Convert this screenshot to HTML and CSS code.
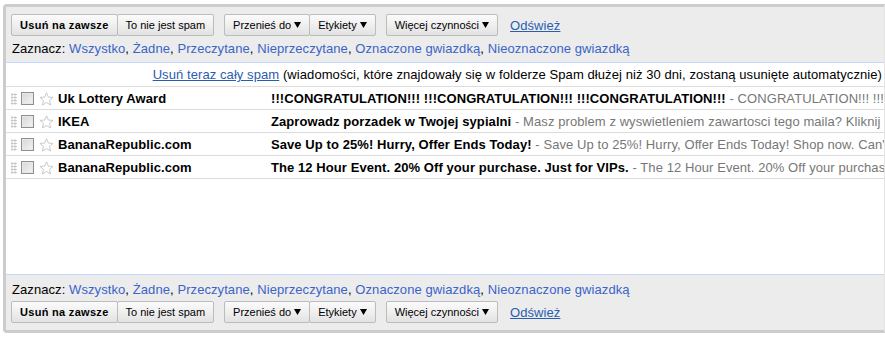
FILE: index.html
```
<!DOCTYPE html>
<html lang="pl">
<head>
<meta charset="utf-8">
<title>Spam</title>
<link rel="stylesheet" href="styles.css">
</head>
<body>
<div class="frame">
  <div class="toolbar toolbar-top">
    <div class="buttons">
      <div class="group">
        <button class="btn btn-bold">Usuń na zawsze</button><button class="btn">To nie jest spam</button>
      </div>
      <div class="group">
        <button class="btn">Przenieś do <svg class="arrow" width="7" height="6" viewBox="0 0 7 6"><path d="M0 0H7L3.5 6Z"/></svg></button><button class="btn">Etykiety <svg class="arrow" width="7" height="6" viewBox="0 0 7 6"><path d="M0 0H7L3.5 6Z"/></svg></button>
      </div>
      <div class="group">
        <button class="btn">Więcej czynności <svg class="arrow" width="7" height="6" viewBox="0 0 7 6"><path d="M0 0H7L3.5 6Z"/></svg></button>
      </div>
      <a class="refresh" href="#">Odśwież</a>
    </div>
    <div class="select">Zaznacz: <span class="opt">Wszystko</span>, <span class="opt">Żadne</span>, <span class="opt">Przeczytane</span>, <span class="opt">Nieprzeczytane</span>, <span class="opt">Oznaczone gwiazdką</span>, <span class="opt">Nieoznaczone gwiazdką</span></div>
  </div>

  <div class="list">
    <div class="info"><a href="#">Usuń teraz cały spam</a> (wiadomości, które znajdowały się w folderze Spam dłużej niż 30 dni, zostaną usunięte automatycznie)</div>

    <div class="row">
      <span class="handle"></span><span class="check"></span>
      <svg class="star" width="15" height="14" viewBox="0 0 15 14"><path d="M7.5 0.8L9.4 5.1L14 5.4L10.5 8.4L11.6 13L7.5 10.5L3.4 13L4.5 8.4L1 5.4L5.6 5.1Z"/></svg>
      <span class="sender">Uk Lottery Award</span>
      <span class="msg"><b>!!!CONGRATULATION!!! !!!CONGRATULATION!!! !!!CONGRATULATION!!!</b><span class="snip"> - CONGRATULATION!!! !!!CONGRATULATION!!! !!!CONGRATULATION!!!</span></span>
    </div>
    <div class="row">
      <span class="handle"></span><span class="check"></span>
      <svg class="star" width="15" height="14" viewBox="0 0 15 14"><path d="M7.5 0.8L9.4 5.1L14 5.4L10.5 8.4L11.6 13L7.5 10.5L3.4 13L4.5 8.4L1 5.4L5.6 5.1Z"/></svg>
      <span class="sender">IKEA</span>
      <span class="msg"><b>Zaprowadz porzadek w Twojej sypialni</b><span class="snip"> - Masz problem z wyswietleniem zawartosci tego maila? Kliknij tutaj</span></span>
    </div>
    <div class="row">
      <span class="handle"></span><span class="check"></span>
      <svg class="star" width="15" height="14" viewBox="0 0 15 14"><path d="M7.5 0.8L9.4 5.1L14 5.4L10.5 8.4L11.6 13L7.5 10.5L3.4 13L4.5 8.4L1 5.4L5.6 5.1Z"/></svg>
      <span class="sender">BananaRepublic.com</span>
      <span class="msg"><b>Save Up to 25%! Hurry, Offer Ends Today!</b><span class="snip"> - Save Up to 25%! Hurry, Offer Ends Today! Shop now. Can't see this email?</span></span>
    </div>
    <div class="row">
      <span class="handle"></span><span class="check"></span>
      <svg class="star" width="15" height="14" viewBox="0 0 15 14"><path d="M7.5 0.8L9.4 5.1L14 5.4L10.5 8.4L11.6 13L7.5 10.5L3.4 13L4.5 8.4L1 5.4L5.6 5.1Z"/></svg>
      <span class="sender">BananaRepublic.com</span>
      <span class="msg"><b>The 12 Hour Event. 20% Off your purchase. Just for VIPs.</b><span class="snip"> - The 12 Hour Event. 20% Off your purchase. Just for VIPs.</span></span>
    </div>
  </div>

  <div class="toolbar toolbar-bottom">
    <div class="select">Zaznacz: <span class="opt">Wszystko</span>, <span class="opt">Żadne</span>, <span class="opt">Przeczytane</span>, <span class="opt">Nieprzeczytane</span>, <span class="opt">Oznaczone gwiazdką</span>, <span class="opt">Nieoznaczone gwiazdką</span></div>
    <div class="buttons">
      <div class="group">
        <button class="btn btn-bold">Usuń na zawsze</button><button class="btn">To nie jest spam</button>
      </div>
      <div class="group">
        <button class="btn">Przenieś do <svg class="arrow" width="7" height="6" viewBox="0 0 7 6"><path d="M0 0H7L3.5 6Z"/></svg></button><button class="btn">Etykiety <svg class="arrow" width="7" height="6" viewBox="0 0 7 6"><path d="M0 0H7L3.5 6Z"/></svg></button>
      </div>
      <div class="group">
        <button class="btn">Więcej czynności <svg class="arrow" width="7" height="6" viewBox="0 0 7 6"><path d="M0 0H7L3.5 6Z"/></svg></button>
      </div>
      <a class="refresh" href="#">Odśwież</a>
    </div>
  </div>
</div>
</body>
</html>
```
FILE: styles.css
```
html, body {
  margin: 0;
  padding: 0;
  background: #fff;
  overflow: hidden;
}
body {
  font-family: "Liberation Sans", Arial, sans-serif;
  font-size: 13px;
  letter-spacing: 0.08px;
  color: #000;
}
.frame {
  margin: 4px 0 0 3px;
  width: 882px;
  box-sizing: border-box;
  border: 3px solid #cccccc;
  border-right: 1px solid #e4e4e4;
  border-radius: 4px 0 0 4px;
  background: #ececec;
  overflow: hidden;
}
.toolbar {
  background: #ececec;
  padding-left: 5px;
}
.toolbar-top {
  padding-top: 7px;
  padding-bottom: 6px;
  border-bottom: 1px solid #c3d9ff;
}
.toolbar-bottom {
  padding-top: 7px;
  padding-bottom: 7px;
  border-top: 1px solid #c3d9ff;
}
.buttons {
  display: flex;
  align-items: center;
  height: 22px;
  gap: 10px;
}
.group {
  display: flex;
}
.btn {
  height: 22px;
  box-sizing: border-box;
  padding: 0 8px;
  border: 1px solid #bcbcbc;
  border-radius: 2px;
  background: linear-gradient(#fbfbfb, #eeeeee 55%, #e2e2e2);
  font-family: "Liberation Sans", Arial, sans-serif;
  font-size: 11px;
  letter-spacing: 0;
  color: #000;
  display: flex;
  align-items: center;
  gap: 3px;
  white-space: nowrap;
}
.group .btn + .btn {
  margin-left: -1px;
}
.btn-bold {
  font-weight: bold;
  letter-spacing: 0.3px;
  padding: 0 8px;
}
.arrow {
  fill: #000;
}
.refresh {
  color: #2a5db0;
  text-decoration: underline;
  font-size: 13px;
  margin-left: 2px;
}
.select {
  line-height: 15px;
  padding-left: 1px;
  white-space: nowrap;
}
.toolbar-top .select {
  margin-top: 5px;
}
.toolbar-bottom .select {
  margin-bottom: 4px;
}
.opt {
  color: #3a64c8;
}
.list {
  background: #fff;
  height: 211px;
}
.info {
  height: 23px;
  line-height: 24px;
  text-align: right;
  padding-right: 2px;
  border-bottom: 1px solid #dcdcdc;
  white-space: nowrap;
}
.info a {
  color: #2a5db0;
  text-decoration: underline;
}
.row {
  border-bottom: 1px solid #dcdcdc;
  display: flex;
  align-items: center;
  white-space: nowrap;
  overflow: hidden;
  padding-top: 1px;
  box-sizing: border-box;
  height: 23px;
}
.handle {
  flex: none;
  width: 6px;
  height: 12px;
  margin-left: 5px;
  background-image: radial-gradient(circle, #b8b8b8 0.9px, transparent 1.2px);
  background-size: 3px 3px;
  background-position: -0.5px 0;
}
.check {
  flex: none;
  width: 13px;
  height: 13px;
  box-sizing: border-box;
  margin-left: 4px;
  border: 1px solid #8f8f8f;
  background: linear-gradient(135deg, #d6d6d6, #f4f4f4);
  box-shadow: inset 0 0 0 1px #e8e8e8;
}
.star {
  flex: none;
  margin-left: 5px;
  fill: #fff;
  stroke: #c8c8c8;
  stroke-width: 1;
}
.sender {
  flex: none;
  width: 213px;
  margin-left: 4px;
  font-weight: bold;
  overflow: hidden;
}
.msg {
  flex: none;
}
.snip {
  color: #777;
}
```
